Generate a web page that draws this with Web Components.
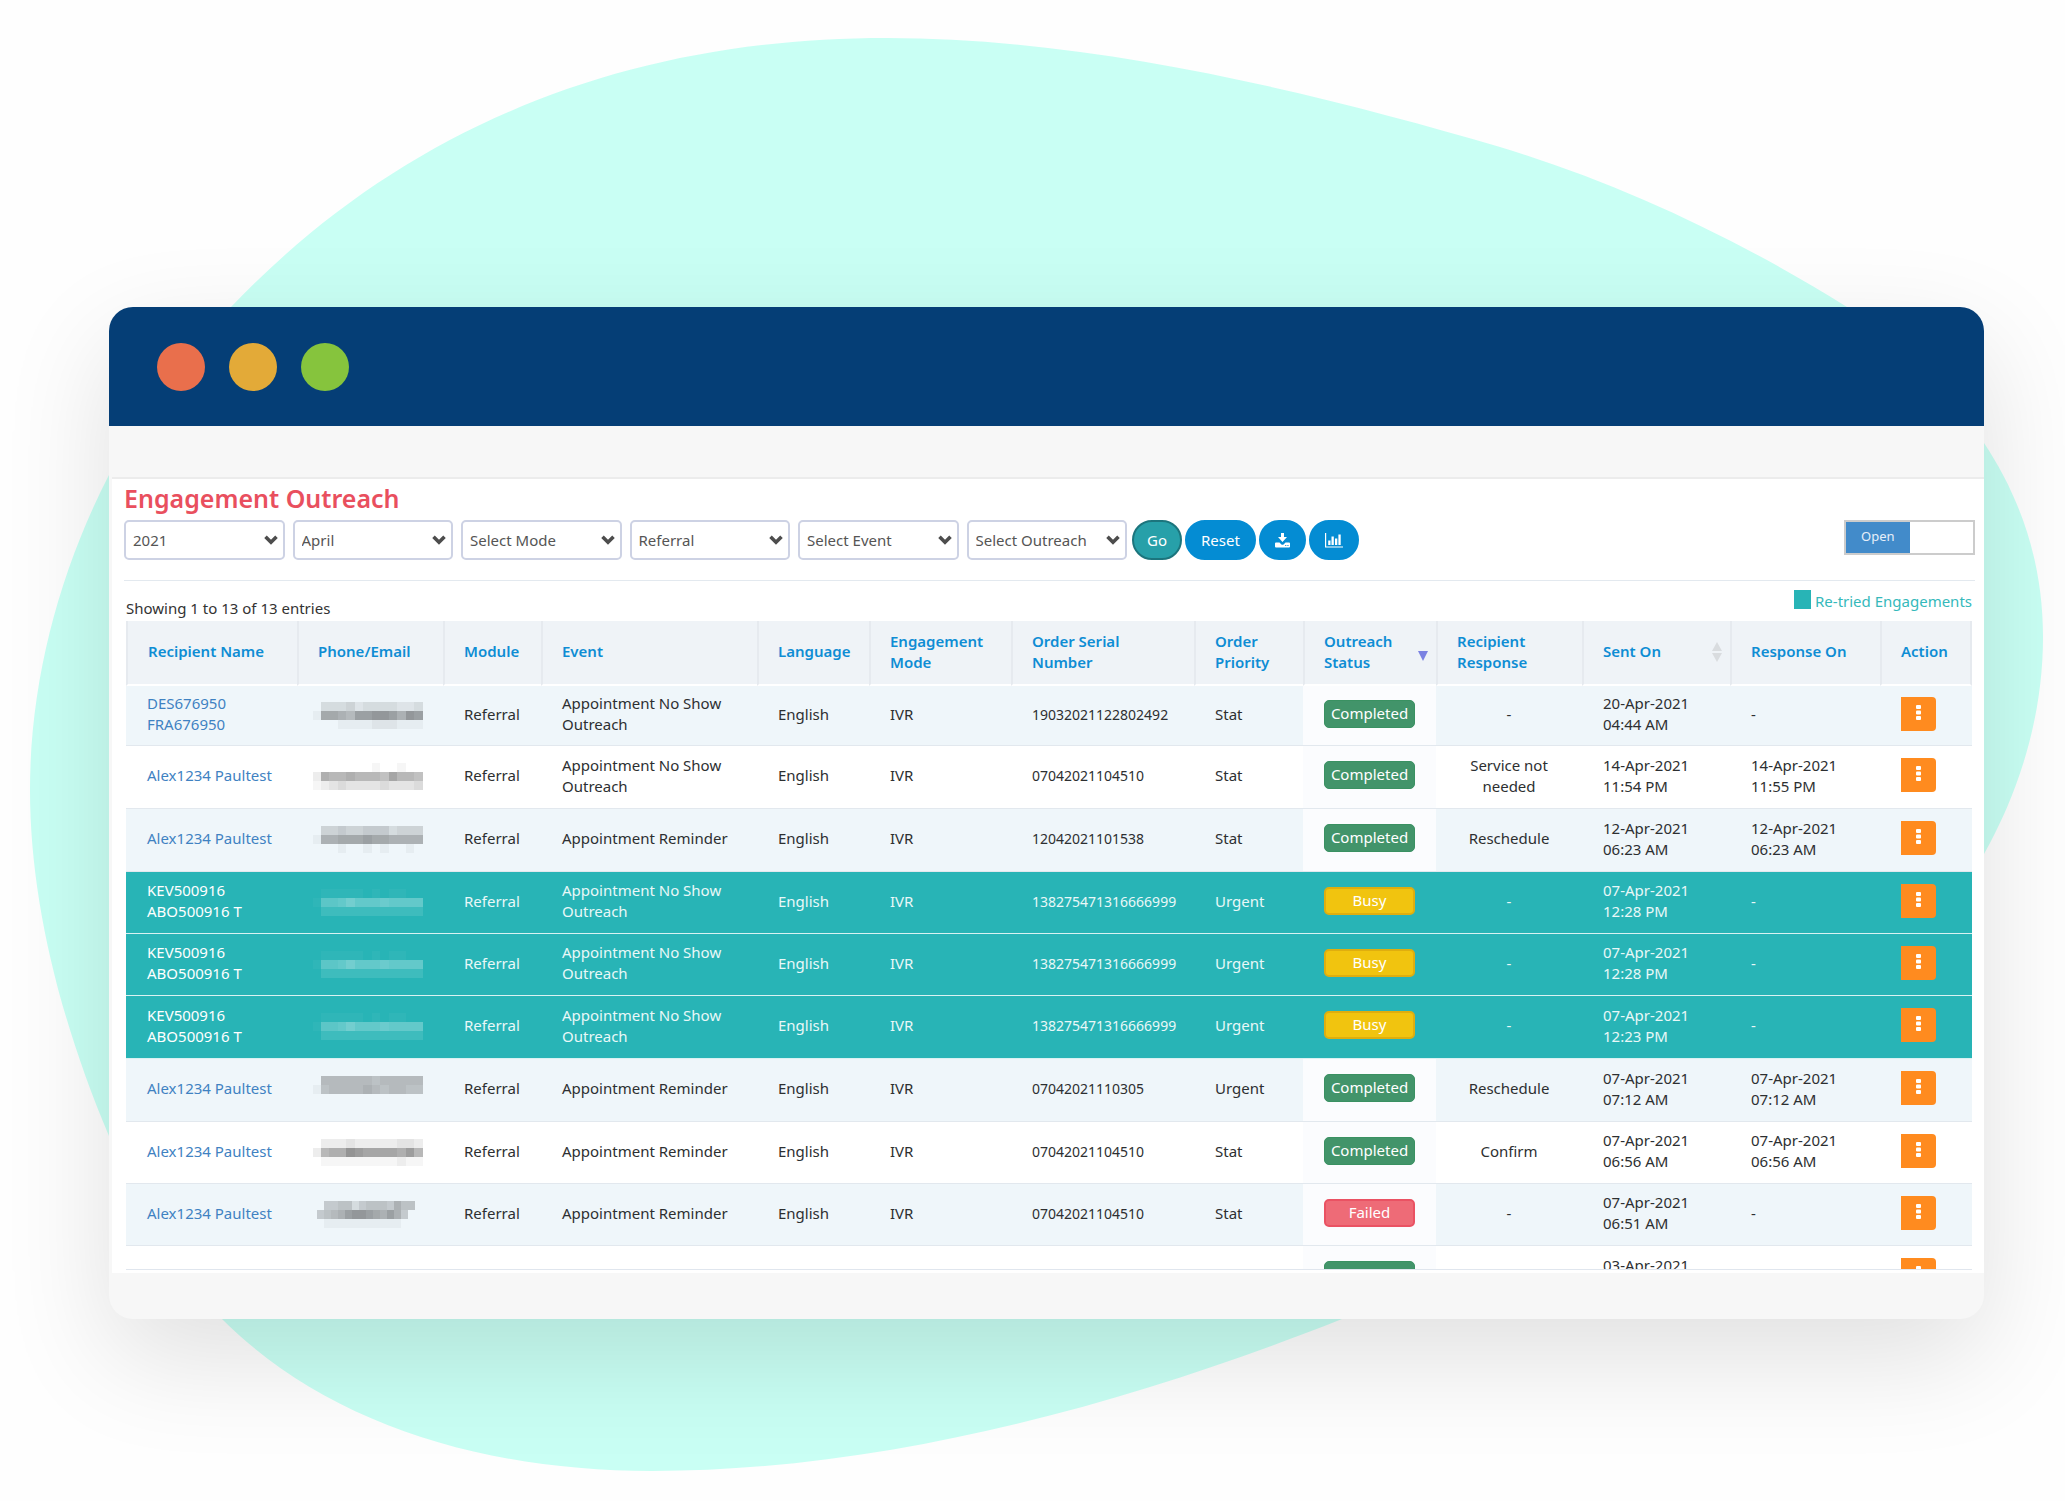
<!DOCTYPE html>
<html lang="en">
<head>
<meta charset="utf-8">
<title>Engagement Outreach</title>
<style>
  html, body { margin: 0; background: #fefefe; }
  body { font: 15px/21px "Noto Sans", "Open Sans", sans-serif; color: #333; }
</style>
</head>
<body>
<blob-scene>
  <browser-window>
    <outreach-page></outreach-page>
  </browser-window>
</blob-scene>

<script>
const define = (name, html, setup) => {
  const template = document.createElement('template');
  template.innerHTML = html;
  customElements.define(name, class extends HTMLElement {
    connectedCallback() {
      if (this.shadowRoot) return;
      const root = this.attachShadow({ mode: 'open' });
      root.append(template.content.cloneNode(true));
      if (setup) setup(this, root);
    }
  });
};

/* Soft organic shape behind the window */
define('blob-scene', `
<style>
  :host { display: grid; overflow: hidden; }
  svg, .stage { grid-area: 1 / 1; }
  svg { width: 100%; height: auto; display: block; }
  .stage { padding: 307px 81px 182px 109px; min-width: 0; }
</style>
<svg viewBox="0 0 2065 1501" aria-hidden="true">
  <path fill="#c9fff4" d="M887 38C1090 38 1313 92 1500 147C1620 183 1740 240 1847 307C1900 339 1950 390 1984 443C2022 500 2043 565 2043 637C2043 715 2020 790 1984 854C1880 1040 1600 1210 1342 1319C1150 1395 900 1471 652 1471C480 1471 325 1422 222 1319C175 1270 135 1205 109 1136C60 1020 30 900 30 790C30 680 60 570 109 475C140 415 185 355 231 307C400 130 620 38 887 38Z"/>
</svg>
<div class="stage"><slot></slot></div>`);

define('browser-window', `
<style>
  :host { display: block; background: #f7f7f7; border-radius: 24px; overflow: hidden;
          box-shadow: 0 38px 110px rgba(0,0,0,.12); }
  header { display: flex; align-items: center; gap: 24px; height: 119px; padding: 0 48px; background: #053e76; }
  i { width: 48px; height: 48px; border-radius: 50%; }
  .r { background: #e96f4c; } .y { background: #e3aa38; } .g { background: #86c43d; }
  .bar { height: 51px; }
  main { margin-left: 3px; background: #fff; border-top: 2px solid #ececec; padding-bottom: 3px; }
  footer { height: 46px; }
</style>
<header><i class="r"></i><i class="y"></i><i class="g"></i></header>
<div class="bar"></div>
<main><slot></slot></main>
<footer></footer>`);

define('filter-select', `
<style>
  :host { display: grid; align-items: center; min-width: 0; }
  select, svg { grid-area: 1 / 1; }
  select { appearance: none; box-sizing: border-box; width: 100%; height: 40px; margin: 0; padding: 0 26px 0 7px;
           border: 2px solid #cdd2e4; border-radius: 5px; background: #fff; color: #555; font: inherit; }
  svg { justify-self: end; margin-right: 7px; pointer-events: none; }
</style>
<select><option></option></select>
<svg width="14" height="10" viewBox="0 0 14 10" aria-hidden="true"><path d="M1.5 1.8L7 7.2L12.500 1.800" fill="none" stroke="#4d4d4d" stroke-width="3.600"/></svg>`,
(host, root) => {
  const select = root.querySelector('select');
  select.setAttribute('aria-label', host.getAttribute('label'));
  root.querySelector('option').textContent = host.getAttribute('value');
});

define('pill-button', `
<style>
  :host { display: block; }
  button { display: flex; align-items: center; justify-content: center; box-sizing: border-box; height: 40px;
           padding: 0 14px; border: 2px solid #048cd3; border-radius: 20px; background: #048cd3; color: #fff; font: inherit; }
  :host([kind="go"]) button { padding: 0 13px; background: #27a0a9; border-color: #1c757d; }
</style>
<button type="button"><slot></slot></button>`,
(host, root) => {
  if (host.hasAttribute('label')) root.querySelector('button').setAttribute('aria-label', host.getAttribute('label'));
});

define('open-toggle', `
<style>
  :host { display: block; }
  label { display: grid; grid-template-columns: 1fr 1fr; box-sizing: border-box; width: 131px; height: 35px;
          border: 2px solid #ccc; background: #fff; font-size: 13px; color: #e6eff9; text-align: center; }
  input { appearance: none; grid-area: 1 / 1 / 2 / 3; margin: 0; }
  span { grid-area: 1 / 1; background: #428bca; line-height: 29px; }
</style>
<label><input type="checkbox" checked><span>Open</span></label>`);

define('status-badge', `
<style>
  :host { display: block; box-sizing: border-box; width: 91px; height: 28px; line-height: 25px; text-align: center;
          border: 1px solid #3a9162; border-radius: 5px; background: #42946a; color: #fff; }
  :host([kind="Busy"]) { background: #f1c40f; border: 2px solid #dfae0e; line-height: 23px; }
  :host([kind="Failed"]) { background: #ee6b77; border: 2px solid #ea5263; line-height: 23px; }
</style>
<slot></slot>`);

/* Pixelated redaction of a contact value; each digit is the strength of one cell */
define('pixel-mask', `
<style>
  :host { display: block; color: #000; }
  :host([light]) { color: #fff; }
  svg { display: block; }
</style>
<svg width="112" height="28" viewBox="0 0 112 28" shape-rendering="crispEdges" aria-hidden="true"></svg>`,
(host, root) => {
  const rows = host.getAttribute('cells').split('/');
  const small = host.hasAttribute('small');
  const w = small ? 7 : 8.5, x0 = small ? 4 : -1;
  let out = '', y = 0;
  rows.forEach(r => {
    const h = 9;
    [...r].forEach((c, i) => {
      if (c !== '0') out += `<rect x="${x0 + Math.round(i * w)}" y="${y}" width="${Math.round((i + 1) * w) - Math.round(i * w)}" height="${h}" fill="currentColor" opacity="${(parseInt(c, 16) * .035).toFixed(3)}"/>`;
    });
    y += h;
  });
  root.querySelector('svg').innerHTML = out;
});

define('row-menu', `
<style>
  :host { display: block; }
  button { display: grid; place-items: center; width: 35px; height: 34px; padding: 0 0 3px; border: 0;
           border-radius: 0 4px 4px 0; background: #ff8b1f; }
</style>
<button type="button" aria-label="Row actions"><svg width="5" height="15" viewBox="0 0 5 15" fill="#fff"><rect width="5" height="4" rx="1"/><rect y="5.500" width="5" height="4" rx="1"/><rect y="11" width="5" height="4" rx="1"/></svg></button>`);

const M = {
  a: '0333423333223/19987aabba8ba/0001111222111',
  b: '0000000100100/298898887a887/1234333343334',
  c: '0445445553444/188999a998888/0001001010010',
  d: '0111110101100/1778a88898888/0333333333333',
  e: '0777777677777/1677778767766/0000000000000',
  f: '0222322222332/2899cbaaaa9b8/0111111111211',
  g: '05566356665866/5678abba98a850/01111111111100',
  none: '0'
};
const NS = 'Appointment No Show Outreach', AR = 'Appointment Reminder', ALEX = 'Alex1234 Paultest', KEV = 'KEV500916<br>ABO500916 T';
const DATA = [
  ['DES676950<br>FRA676950', 'a', NS, '19032021122802492', 'Stat', 'Completed', '-', '20-Apr-2021 04:44 AM', '-'],
  [ALEX, 'b', NS, '07042021104510', 'Stat', 'Completed', 'Service not needed', '14-Apr-2021 11:54 PM', '14-Apr-2021 11:55 PM'],
  [ALEX, 'c', AR, '12042021101538', 'Stat', 'Completed', 'Reschedule', '12-Apr-2021 06:23 AM', '12-Apr-2021 06:23 AM'],
  [KEV, 'd', NS, '138275471316666999', 'Urgent', 'Busy', '-', '07-Apr-2021 12:28 PM', '-'],
  [KEV, 'd', NS, '138275471316666999', 'Urgent', 'Busy', '-', '07-Apr-2021 12:28 PM', '-'],
  [KEV, 'd', NS, '138275471316666999', 'Urgent', 'Busy', '-', '07-Apr-2021 12:23 PM', '-'],
  [ALEX, 'e', AR, '07042021110305', 'Urgent', 'Completed', 'Reschedule', '07-Apr-2021 07:12 AM', '07-Apr-2021 07:12 AM'],
  [ALEX, 'f', AR, '07042021104510', 'Stat', 'Completed', 'Confirm', '07-Apr-2021 06:56 AM', '07-Apr-2021 06:56 AM'],
  [ALEX, 'g', AR, '07042021104510', 'Stat', 'Failed', '-', '07-Apr-2021 06:51 AM', '-'],
  [ALEX, 'none', AR, '07042021104510', 'Stat', 'Completed', '-', '03-Apr-2021 06:51 AM', '-']
];
const COLS = [171, 146, 98, 216, 112, 142, 183, 109, 133, 146, 148, 150, 92];

define('outreach-table', `
<style>
  :host { display: block; height: 648px; overflow: hidden; border-bottom: 1px solid #e0e6ee; }
  table { width: 100%; table-layout: fixed; border-collapse: separate; border-spacing: 0; }
  th, td { box-sizing: border-box; padding: 0 0 0 21px; text-align: left; vertical-align: middle; }
  th { height: 65px; background: #eff3f7; border-left: 2px solid #e6eaef; border-bottom: 2px solid #fff;
       padding: 0 0 2px 19px; color: #0e8dd4; font-weight: 600; background-clip: padding-box; }
  th:first-child { padding-left: 20px; }
  th:last-child { border-right: 2px solid #e6eaef; }
  .sort { display: flex; align-items: center; justify-content: space-between; padding-right: 8px; }
  td { height: 62px; padding-bottom: 3px; border-bottom: 1px solid #e2e8ee; color: #2d2f31; }
  tr:nth-child(odd) td { background: #eff6fa; }
  tr:nth-child(4n + 2) td, tr:nth-child(4n + 3) td { height: 63px; }
  tr:first-child td { height: 60px; }
  td.phone { padding: 0 0 0 16px; }
  td.num { font-size: 14px; }
  tr td.status { background: #fbfcfe; padding-bottom: 4px; }
  tr td.reply { text-align: center; padding: 0 30px 3px; }
  td.date { padding-right: 36px; }
  td.act { padding-bottom: 4px; }
  a { color: #3f82c2; text-decoration: none; }
  tr.retry td { background: #28b4b6; color: #e9f8f8; border-bottom-color: #d9f2f2; }
  tr.retry a { color: #fff; }
</style>
<table>
  <colgroup></colgroup>
  <thead><tr>
    <th>Recipient Name</th><th>Phone/Email</th><th>Module</th><th>Event</th><th>Language</th>
    <th>Engagement<br>Mode</th><th>Order Serial<br>Number</th><th>Order<br>Priority</th>
    <th><div class="sort"><span>Outreach<br>Status</span><svg width="10" height="18" viewBox="0 0 10 18"><path d="M0 8H10L5 18Z" fill="#7b82e2"/></svg></div></th>
    <th>Recipient<br>Response</th>
    <th><div class="sort"><span>Sent On</span><svg width="10" height="20" viewBox="0 0 10 20"><path d="M0 9H10L5 0ZM0 11H10L5 20Z" fill="#d9dcdf"/></svg></div></th>
    <th>Response On</th><th>Action</th>
  </tr></thead>
  <tbody></tbody>
</table>`,
(host, root) => {
  const total = COLS.reduce((a, b) => a + b);
  root.querySelector('colgroup').innerHTML = COLS.map(c => `<col style="width:${c / total * 100}%">`).join('');
  root.querySelector('tbody').innerHTML = DATA.map(([name, mask, event, serial, priority, status, reply, sent, resp]) => {
    const retry = status === 'Busy';
    return `<tr${retry ? ' class="retry"' : ''}><td><a href="#">${name}</a></td>
      <td class="phone"><pixel-mask cells="${M[mask]}"${retry ? ' light' : ''}${mask === 'g' ? ' small' : ''}></pixel-mask></td>
      <td>Referral</td><td>${event.replace('Show ', 'Show<br>')}</td><td>English</td><td>IVR</td>
      <td class="num">${serial}</td><td>${priority}</td>
      <td class="status"><status-badge kind="${status}">${status}</status-badge></td>
      <td class="reply">${reply}</td><td class="date">${sent}</td><td class="date">${resp}</td>
      <td class="act"><row-menu></row-menu></td></tr>`;
  }).join('');
});

define('outreach-page', `
<style>
  :host { display: block; padding: 3px 9px 0 12px; }
  h1 { margin: 0 0 6px; font-size: 25px; line-height: 32px; font-weight: 600; color: #e94f5e; }
  .tools { display: flex; align-items: flex-start; justify-content: space-between; padding-bottom: 20px; border-bottom: 1px solid #e3e9ef; }
  .filters { display: flex; gap: 5px; }
  .selects { display: grid; grid-template-columns: repeat(6, 1fr); gap: 8px; width: 1003px; }
  .buttons { display: flex; gap: 3px; }
  .info { display: flex; justify-content: space-between; align-items: flex-end; height: 38px; padding: 0 3px 2px 2px; }
  .legend { display: flex; gap: 4px; align-self: flex-start; margin-top: 9px; color: #35b9bb; }
  .legend i { width: 17px; height: 19px; background: #28b4b6; }
  .legend span { padding-top: 1px; }
  outreach-table { margin: 0 3px 0 2px; }
  svg { display: block; }
</style>
<h1>Engagement Outreach</h1>
<div class="tools">
  <div class="filters">
    <div class="selects">
      <filter-select label="Year" value="2021"></filter-select>
      <filter-select label="Month" value="April"></filter-select>
      <filter-select label="Mode" value="Select Mode"></filter-select>
      <filter-select label="Module" value="Referral"></filter-select>
      <filter-select label="Event" value="Select Event"></filter-select>
      <filter-select label="Outreach" value="Select Outreach"></filter-select>
    </div>
    <div class="buttons">
      <pill-button kind="go">Go</pill-button>
      <pill-button>Reset</pill-button>
      <pill-button label="Download"><svg width="15" height="15" viewBox="0 0 15 15" fill="#fff"><path d="M6 0H9V4H12L7.500 9L3 4H6ZM0 10.500Q0 9.500 1 9.500H4.500L6.200 11.200Q7.500 12.200 8.800 11.200L10.500 9.500H14Q15 9.500 15 10.500V13.500Q15 14.500 14 14.500H1Q0 14.500 0 13.500ZM10.200 12V13.100H11.300V12ZM12.400 12V13.100H13.500V12Z"/></svg></pill-button>
      <pill-button label="Charts"><svg width="18" height="15" viewBox="0 0 18 15" fill="#fff"><path d="M0 0H1.200V13.400H18V14.600H0ZM3.200 7.500H5.500V12H3.200ZM6.500 3.500H8.800V12H6.500ZM10 5.500H12.300V12H10ZM13.400 1.500H15.700V12H13.400Z"/></svg></pill-button>
    </div>
  </div>
  <open-toggle></open-toggle>
</div>
<div class="info">
  <span>Showing 1 to 13 of 13 entries</span>
  <div class="legend"><i></i><span>Re-tried Engagements</span></div>
</div>
<outreach-table></outreach-table>`);
</script>
</body>
</html>
